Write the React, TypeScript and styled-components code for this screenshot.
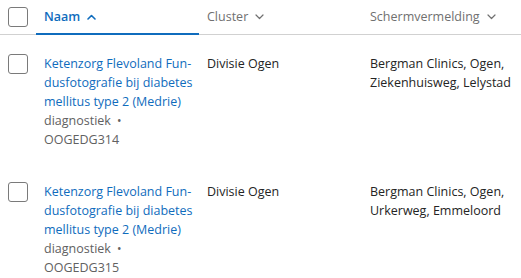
import React from "react";
import styled, { createGlobalStyle } from "styled-components";

const Global = createGlobalStyle`
  html, body { margin: 0; padding: 0; background: #ffffff; }
  body { font-family: "Open Sans", "Noto Sans", sans-serif; -webkit-font-smoothing: antialiased; }
`;

const Table = styled.div`
  width: 521px;
  display: flex;
  flex-direction: column;
`;

const cols = "36px 163px 163px 159px";

const HeaderRow = styled.div`
  display: grid;
  grid-template-columns: ${cols};
  height: 35px;
  border-bottom: 1px solid #d1d1d1;
  box-sizing: border-box;
`;

const HeaderCell = styled.div<{ $active?: boolean }>`
  display: flex;
  align-items: center;
  gap: 7px;
  padding-left: 8px;
  padding-bottom: 1px;
  font-size: 12.5px;
  color: ${(p) => (p.$active ? "#0f6cbd" : "#707070")};
  font-weight: ${(p) => (p.$active ? 600 : 400)};
  position: relative;
  &::after {
    content: "";
    display: ${(p) => (p.$active ? "block" : "none")};
    position: absolute;
    left: 0;
    right: 0;
    bottom: -1px;
    height: 2px;
    background: #0f6cbd;
  }
`;

const CheckCell = styled.div<{ $top?: boolean }>`
  display: flex;
  justify-content: flex-start;
  align-items: ${(p) => (p.$top ? "flex-start" : "center")};
  padding-left: 8px;
`;

const Box = styled.div`
  width: 18px;
  height: 18px;
  border: 1px solid #7a7a7a;
  border-radius: 3px;
  background: #fff;
`;

const Row = styled.div`
  display: grid;
  grid-template-columns: ${cols};
  padding: 19px 0 14px;
`;

const Cell = styled.div`
  padding-left: 8px;
  padding-right: 4px;
  font-size: 12.5px;
  line-height: 19px;
  color: #242424;
`;

const Line = styled.span`
  display: block;
  white-space: nowrap;
`;

const NameLink = styled.a`
  color: #0f6cbd;
  text-decoration: none;
  display: block;
`;

const Meta = styled.div`
  color: #616161;
`;

const Dot = styled.span`
  margin-left: 6px;
  font-size: 12px;
`;

const Chevron = ({ up, color }: { up?: boolean; color: string }) => (
  <svg width="9" height="6" viewBox="0 0 9 6" fill="none">
    <path
      d={up ? "M1 5L4.5 1.5L8 5" : "M1 1L4.5 4.5L8 1"}
      stroke={color}
      strokeWidth={up ? 1.6 : 1.2}
      strokeLinecap="round"
      strokeLinejoin="round"
    />
  </svg>
);

const rows = [
  { code: "OOGEDG314", addr: ["Bergman Clinics, Ogen,", "Ziekenhuisweg, Lelystad"] },
  { code: "OOGEDG315", addr: ["Bergman Clinics, Ogen,", "Urkerweg, Emmeloord"] },
];

const nameLines = ["Ketenzorg Flevoland Fun-", "dusfotografie bij diabetes", "mellitus type 2 (Medrie)"];

export default function App() {
  return (
    <>
      <Global />
      <Table>
        <HeaderRow>
          <CheckCell>
            <Box />
          </CheckCell>
          <HeaderCell $active>
            Naam <Chevron up color="#0f6cbd" />
          </HeaderCell>
          <HeaderCell>
            Cluster <Chevron color="#707070" />
          </HeaderCell>
          <HeaderCell>
            Schermvermelding <Chevron color="#707070" />
          </HeaderCell>
        </HeaderRow>
        {rows.map((r) => (
          <Row key={r.code}>
            <CheckCell $top>
              <Box />
            </CheckCell>
            <Cell>
              <NameLink href="#">
                {nameLines.map((l) => (
                  <Line key={l}>{l}</Line>
                ))}
              </NameLink>
              <Meta>
                diagnostiek<Dot>•</Dot>
              </Meta>
              <Meta>{r.code}</Meta>
            </Cell>
            <Cell>Divisie Ogen</Cell>
            <Cell>
              {r.addr.map((a) => (
                <Line key={a}>{a}</Line>
              ))}
            </Cell>
          </Row>
        ))}
      </Table>
    </>
  );
}
